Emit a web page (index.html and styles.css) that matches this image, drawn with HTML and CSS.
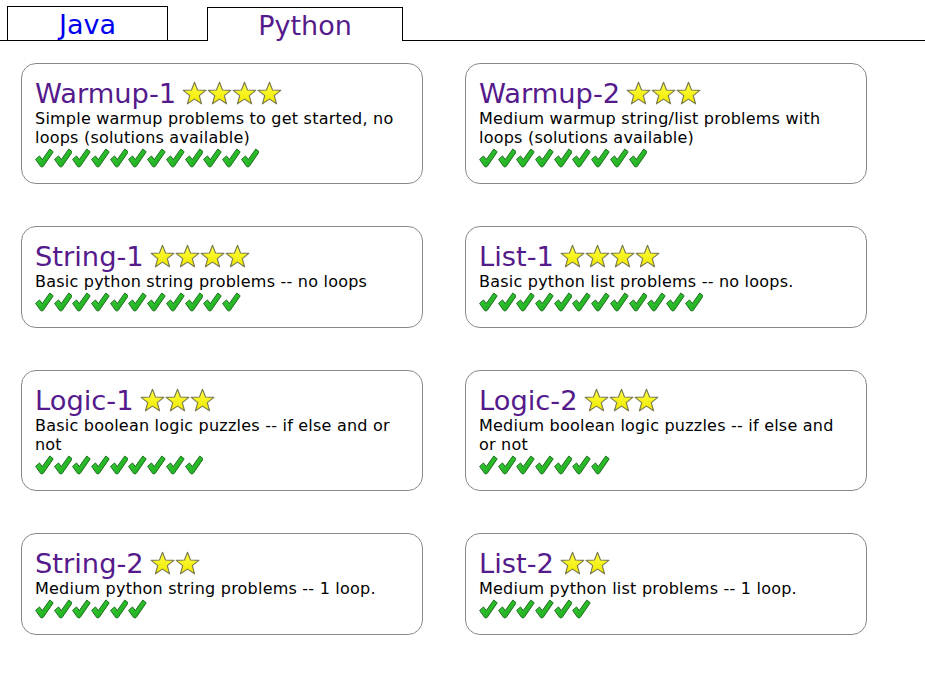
FILE: index.html
```html
<!DOCTYPE html>
<html>
<head>
<meta charset="utf-8">
<link rel="stylesheet" href="styles.css">
</head>
<body>
<svg class="defs" width="0" height="0">
  <defs>
    <linearGradient id="sg" x1="0" y1="0" x2="0" y2="1">
      <stop offset="0" stop-color="#ffff40"/>
      <stop offset="1" stop-color="#f0e800"/>
    </linearGradient>
    <linearGradient id="cg" x1="0" y1="0" x2="1" y2="1">
      <stop offset="0" stop-color="#3fd43f"/>
      <stop offset="1" stop-color="#14a014"/>
    </linearGradient>
    <symbol id="star" viewBox="0 0 24 24">
      <polygon points="12,1.2 14.9,8.6 22.9,9 16.6,14 18.8,21.9 12,17.4 5.2,21.9 7.4,14 1.1,9 9.1,8.6" fill="url(#sg)" stroke="#7a7a50" stroke-width="1.1" stroke-linejoin="round"/>
    </symbol>
    <symbol id="chk" viewBox="0 0 19 20">
      <path d="M0.6,11.4 L4.6,7.9 L7.4,11.6 L15,0.9 L18.6,3.7 L8.4,18.5 Q7,19.8 5.6,18.5 Z" fill="url(#cg)" stroke="#1d6e1d" stroke-width="1" stroke-linejoin="round"/>
    </symbol>
  </defs>
</svg>
<div class="tabs">
  <div class="tab">Java</div>
  <div class="tab active">Python</div>
</div>
<div class="grid">
  <div class="card">
    <div class="title"><span class="name">Warmup-1</span><span class="stars"><svg><use href="#star"/></svg><svg><use href="#star"/></svg><svg><use href="#star"/></svg><svg><use href="#star"/></svg></span></div>
    <div class="desc">Simple warmup problems to get started, no loops (solutions available)</div>
    <div class="checks"><svg><use href="#chk"/></svg><svg><use href="#chk"/></svg><svg><use href="#chk"/></svg><svg><use href="#chk"/></svg><svg><use href="#chk"/></svg><svg><use href="#chk"/></svg><svg><use href="#chk"/></svg><svg><use href="#chk"/></svg><svg><use href="#chk"/></svg><svg><use href="#chk"/></svg><svg><use href="#chk"/></svg><svg><use href="#chk"/></svg></div>
  </div>
  <div class="card">
    <div class="title"><span class="name">Warmup-2</span><span class="stars"><svg><use href="#star"/></svg><svg><use href="#star"/></svg><svg><use href="#star"/></svg></span></div>
    <div class="desc">Medium warmup string/list problems with loops (solutions available)</div>
    <div class="checks"><svg><use href="#chk"/></svg><svg><use href="#chk"/></svg><svg><use href="#chk"/></svg><svg><use href="#chk"/></svg><svg><use href="#chk"/></svg><svg><use href="#chk"/></svg><svg><use href="#chk"/></svg><svg><use href="#chk"/></svg><svg><use href="#chk"/></svg></div>
  </div>
  <div class="card">
    <div class="title"><span class="name">String-1</span><span class="stars"><svg><use href="#star"/></svg><svg><use href="#star"/></svg><svg><use href="#star"/></svg><svg><use href="#star"/></svg></span></div>
    <div class="desc">Basic python string problems -- no loops</div>
    <div class="checks"><svg><use href="#chk"/></svg><svg><use href="#chk"/></svg><svg><use href="#chk"/></svg><svg><use href="#chk"/></svg><svg><use href="#chk"/></svg><svg><use href="#chk"/></svg><svg><use href="#chk"/></svg><svg><use href="#chk"/></svg><svg><use href="#chk"/></svg><svg><use href="#chk"/></svg><svg><use href="#chk"/></svg></div>
  </div>
  <div class="card">
    <div class="title"><span class="name">List-1</span><span class="stars"><svg><use href="#star"/></svg><svg><use href="#star"/></svg><svg><use href="#star"/></svg><svg><use href="#star"/></svg></span></div>
    <div class="desc">Basic python list problems -- no loops.</div>
    <div class="checks"><svg><use href="#chk"/></svg><svg><use href="#chk"/></svg><svg><use href="#chk"/></svg><svg><use href="#chk"/></svg><svg><use href="#chk"/></svg><svg><use href="#chk"/></svg><svg><use href="#chk"/></svg><svg><use href="#chk"/></svg><svg><use href="#chk"/></svg><svg><use href="#chk"/></svg><svg><use href="#chk"/></svg><svg><use href="#chk"/></svg></div>
  </div>
  <div class="card">
    <div class="title"><span class="name">Logic-1</span><span class="stars"><svg><use href="#star"/></svg><svg><use href="#star"/></svg><svg><use href="#star"/></svg></span></div>
    <div class="desc">Basic boolean logic puzzles -- if else and or not</div>
    <div class="checks"><svg><use href="#chk"/></svg><svg><use href="#chk"/></svg><svg><use href="#chk"/></svg><svg><use href="#chk"/></svg><svg><use href="#chk"/></svg><svg><use href="#chk"/></svg><svg><use href="#chk"/></svg><svg><use href="#chk"/></svg><svg><use href="#chk"/></svg></div>
  </div>
  <div class="card">
    <div class="title"><span class="name">Logic-2</span><span class="stars"><svg><use href="#star"/></svg><svg><use href="#star"/></svg><svg><use href="#star"/></svg></span></div>
    <div class="desc">Medium boolean logic puzzles -- if else and or not</div>
    <div class="checks"><svg><use href="#chk"/></svg><svg><use href="#chk"/></svg><svg><use href="#chk"/></svg><svg><use href="#chk"/></svg><svg><use href="#chk"/></svg><svg><use href="#chk"/></svg><svg><use href="#chk"/></svg></div>
  </div>
  <div class="card">
    <div class="title"><span class="name">String-2</span><span class="stars"><svg><use href="#star"/></svg><svg><use href="#star"/></svg></span></div>
    <div class="desc">Medium python string problems -- 1 loop.</div>
    <div class="checks"><svg><use href="#chk"/></svg><svg><use href="#chk"/></svg><svg><use href="#chk"/></svg><svg><use href="#chk"/></svg><svg><use href="#chk"/></svg><svg><use href="#chk"/></svg></div>
  </div>
  <div class="card">
    <div class="title"><span class="name">List-2</span><span class="stars"><svg><use href="#star"/></svg><svg><use href="#star"/></svg></span></div>
    <div class="desc">Medium python list problems -- 1 loop.</div>
    <div class="checks"><svg><use href="#chk"/></svg><svg><use href="#chk"/></svg><svg><use href="#chk"/></svg><svg><use href="#chk"/></svg><svg><use href="#chk"/></svg><svg><use href="#chk"/></svg></div>
  </div>
</div>
</body>
</html>
```
FILE: styles.css
```css
html, body {
  margin: 0;
  padding: 0;
  background: #fff;
  font-family: "DejaVu Sans", Verdana, sans-serif;
}
.defs {
  position: absolute;
  width: 0;
  height: 0;
}
.tabs {
  display: flex;
  align-items: flex-end;
  height: 40px;
  border-bottom: 1px solid #000;
}
.tab {
  box-sizing: border-box;
  border: 1px solid #000;
  border-bottom: none;
  background: #fff;
  font-size: 27px;
  text-align: center;
  color: #0000ee;
  height: 34px;
  line-height: 35px;
}
.tabs .tab:first-child {
  margin-left: 7px;
  width: 161px;
}
.tab.active {
  margin-left: 39px;
  width: 196px;
  margin-bottom: -1px;
  color: #551a8b;
  line-height: 36px;
}
.grid {
  display: grid;
  grid-template-columns: 402px 402px;
  column-gap: 42px;
  row-gap: 42px;
  margin: 22px 0 0 21px;
}
.card {
  box-sizing: border-box;
  border: 1px solid #888;
  border-radius: 15px;
  padding: 13px 13px 14px 13px;
}
.title {
  display: flex;
  align-items: center;
  height: 32px;
}
.name {
  font-size: 27.3px;
  color: #551a8b;
  margin-right: 6px;
}
.stars {
  display: flex;
}
.stars svg {
  width: 25px;
  height: 25px;
}
.desc {
  font-size: 16px;
  letter-spacing: 0.22px;
  line-height: 19px;
  color: #000;
}
.checks {
  display: flex;
  height: 22px;
  align-items: center;
}
.checks svg {
  width: 18.7px;
  height: 20px;
}
```
